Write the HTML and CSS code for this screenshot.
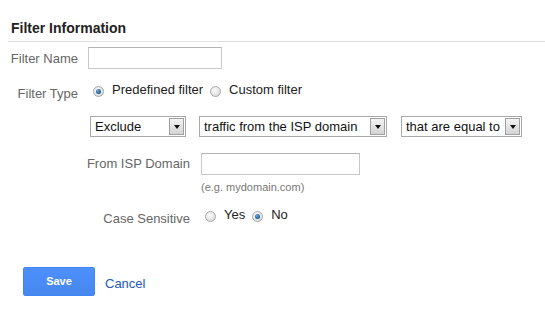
FILE: index.html
```html
<!DOCTYPE html>
<html lang="en">

<head>
    <meta charset="UTF-8" />
    <meta name="viewport" content="width=device-width, initial-scale=1.0" />
    <title>Filter Information</title>
    <link rel="stylesheet" href="styles.css">
</head>

<body>
    <div class="header">Filter Information</div>

    <div class="form">
        <div class="row nameRow">
            <span class="label short">Filter Name</span>
            <span class="textBox nameBox"></span>
        </div>

        <div class="row optRow typeRow">
            <span class="label short lowered">Filter Type</span>
            <span class="choice"><span class="radio checked"></span>Predefined filter</span>
            <span class="choice"><span class="radio"></span>Custom filter</span>
        </div>

        <div class="selectRow">
            <div class="dropDown dd1"><span class="ddText">Exclude</span><span class="ddArrow"></span></div>
            <div class="dropDown dd2"><span class="ddText">traffic from the ISP domain</span><span class="ddArrow"></span></div>
            <div class="dropDown dd3"><span class="ddText">that are equal to</span><span class="ddArrow"></span></div>
        </div>

        <div class="row ispRow">
            <span class="label long">From ISP Domain</span>
            <div>
                <span class="textBox ispBox"></span>
                <p class="hint">(e.g. mydomain.com)</p>
            </div>
        </div>

        <div class="row optRow caseRow">
            <span class="label long lowered">Case Sensitive</span>
            <span class="choice"><span class="radio"></span>Yes</span>
            <span class="choice"><span class="radio checked"></span>No</span>
        </div>

        <div class="buttons">
            <span class="saveBtn">Save</span>
            <a class="cancelLink" href="#">Cancel</a>
        </div>
    </div>
</body>

</html>
```

FILE: styles.css
```css
body {
    margin: 0;
    background-color: white;
    font-family: "Liberation Sans", Arial, sans-serif;
    font-size: 13px;
    color: #222;
}

.header {
    margin-left: 8px;
    padding: 19px 0 4px 3px;
    font-size: 14px;
    line-height: 18px;
    font-weight: bold;
    color: #222;
    border-bottom: 1px solid #e0e0e0;
}

.form {
    padding-left: 10px;
}

.row {
    display: flex;
}

.label {
    color: #666;
    text-align: right;
    flex-shrink: 0;
}

.label.short {
    width: 68px;
    margin-right: 10px;
}

.label.long {
    width: 180px;
    margin-right: 11px;
}

.lowered {
    padding-top: 4px;
}

.textBox {
    display: block;
    height: 20px;
    border: 1px solid #c8c8c8;
    border-top-color: #b4b4b4;
    background: white;
}

.nameRow {
    margin-top: 5px;
    align-items: center;
    height: 22px;
}

.nameBox {
    width: 132px;
}

.optRow {
    align-items: flex-start;
    line-height: 16px;
}

.typeRow {
    margin-top: 13px;
}

.choice {
    display: flex;
    align-items: center;
    margin-right: 7px;
    color: #222;
}

.radio {
    display: inline-block;
    width: 9px;
    height: 9px;
    margin: 3px 8px 0 0;
    border: 1px solid #a8a8a8;
    border-radius: 50%;
    background: radial-gradient(circle at 40% 35%, #fbfbfb 0%, #e4e4e4 60%, #c8c8c8 100%);
    position: relative;
}

.radio.checked::after {
    content: "";
    position: absolute;
    left: 2px;
    top: 2px;
    width: 5px;
    height: 5px;
    border-radius: 50%;
    background: radial-gradient(circle at 40% 35%, #6fa8d8 0%, #22679f 60%, #10406a 100%);
}

.typeRow .label {
    margin-right: 15px;
}

.selectRow {
    display: flex;
    margin: 14px 0 0 80px;
    gap: 13px;
}

.dropDown {
    display: flex;
    height: 19px;
    border: 1px solid #a9a9a9;
    background: white;
    color: #111;
}

.ddText {
    flex: 1;
    padding-left: 4px;
    line-height: 19px;
    white-space: nowrap;
}

.ddArrow {
    width: 13px;
    margin: 1px;
    border: 1px solid #a0a0a0;
    background: linear-gradient(#f4f4f4, #d4d4d4);
    display: flex;
    align-items: center;
    justify-content: center;
}

.ddArrow::before {
    content: "";
    border-left: 3px solid transparent;
    border-right: 3px solid transparent;
    border-top: 4px solid #111;
}

.dd1 {
    width: 94px;
}

.dd2 {
    width: 186px;
}

.dd3 {
    width: 119px;
    margin-left: 1px;
}

.ispRow {
    margin-top: 16px;
    align-items: flex-start;
}

.ispRow .label {
    line-height: 22px;
}

.ispBox {
    width: 157px;
}

.hint {
    margin: 6px 0 0 0;
    font-size: 11px;
    line-height: 13px;
    color: #777;
}

.caseRow {
    margin-top: 13px;
}

.caseRow .label {
    margin-right: 15px;
}

.buttons {
    display: flex;
    align-items: center;
    margin: 40px 0 0 13px;
}

.saveBtn {
    display: block;
    width: 70px;
    height: 27px;
    line-height: 26px;
    text-align: center;
    font-size: 11px;
    font-weight: bold;
    color: white;
    background: linear-gradient(#4d90fe, #4787ed);
    border: 1px solid #3f85f5;
    border-radius: 2px;
}

.cancelLink {
    margin-left: 10px;
    color: #2359b8;
    text-decoration: none;
    padding-top: 3px;
}
```
